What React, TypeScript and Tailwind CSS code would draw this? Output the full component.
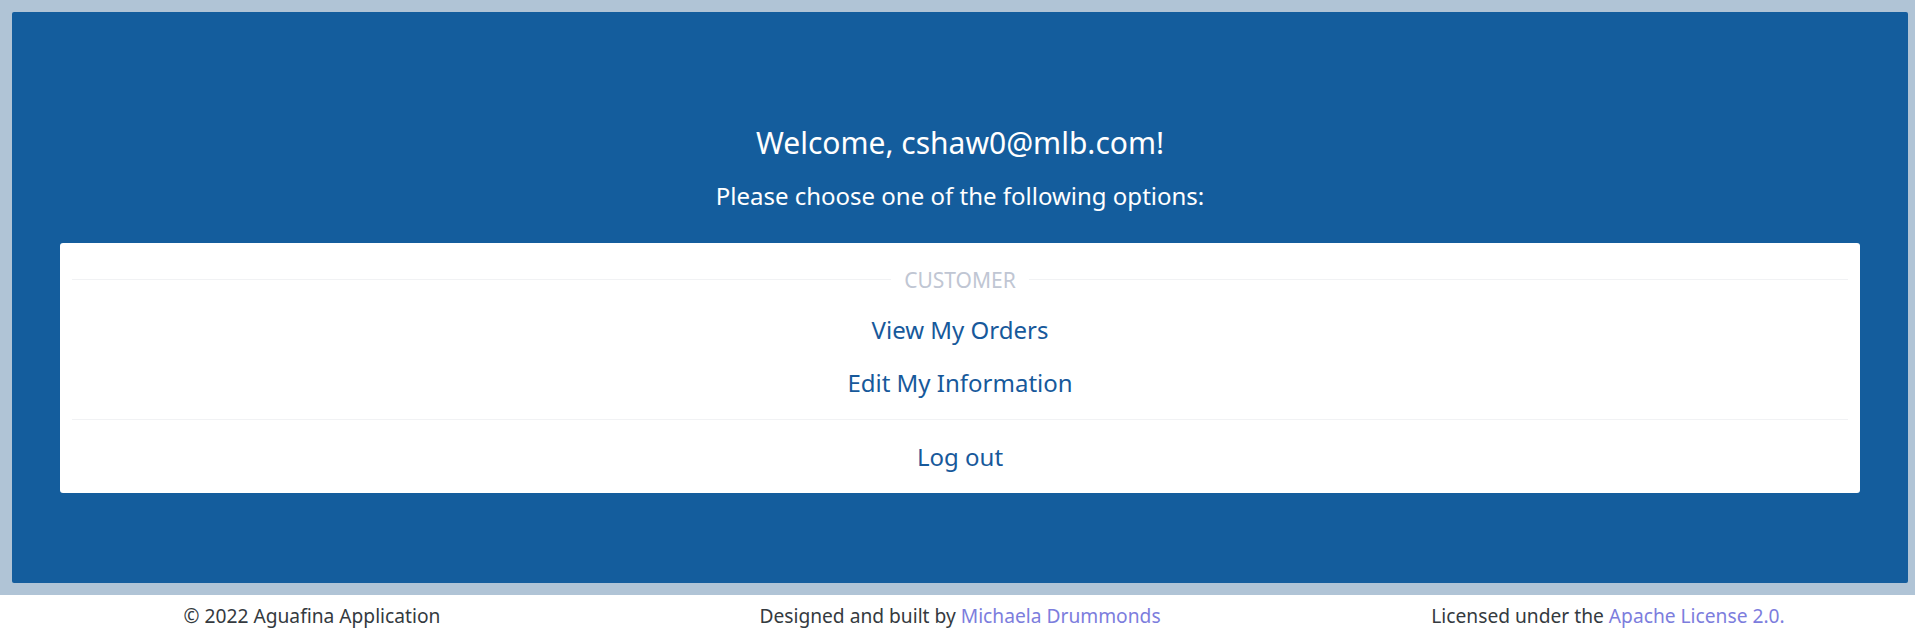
import React from 'react';

const font = { fontFamily: '"Noto Sans", "Open Sans", sans-serif' };

const MenuLink = ({ label }: { label: string }) => (
  <div className="h-[53px] flex items-center justify-center">
    <a href="#" className="text-[24px] leading-[36px] text-[#17599b] no-underline">
      {label}
    </a>
  </div>
);

const App = () => {
  return (
    <div className="w-full overflow-hidden bg-white" style={font}>
      <div className="w-[1920px]">
        <div className="bg-[#b0c4d6] p-[12px]">
          <div className="bg-[#145d9d] rounded-[2px] pt-[113px] pb-[90px] px-[48px] text-white text-center">
            <h4 className="text-[30px] leading-[36px] mb-[20px]">Welcome, cshaw0@mlb.com!</h4>
            <h5 className="text-[24px] leading-[29px] mb-[33px]">Please choose one of the following options:</h5>
            <div className="bg-white rounded-[3px] px-[12px] pt-[25px]">
              <div className="h-6 flex items-center">
                <div className="flex-1 h-px bg-[#f1f2f4] mt-[-2px]" />
                <span className="px-[13px] text-[21px] leading-6 text-[#c0c6d3]">CUSTOMER</span>
                <div className="flex-1 h-px bg-[#f1f2f4] mt-[-2px]" />
              </div>
              <div className="mt-[11px]">
                <MenuLink label="View My Orders" />
                <MenuLink label="Edit My Information" />
              </div>
              <div className="mt-[10px] h-px bg-[#f1f2f4]" />
              <div className="h-[73px] pt-px flex items-center justify-center">
                <a href="#" className="text-[24px] leading-[36px] text-[#17599b]">
                  Log out
                </a>
              </div>
            </div>
          </div>
        </div>
        <footer className="h-[43px] flex items-center justify-center text-[19.2px] text-[#343a40]">
          <div className="w-[648px] shrink-0 text-center">© 2022 Aguafina Application</div>
          <div className="w-[648px] shrink-0 text-center">
            Designed and built by <a href="#" className="text-[#7c7ddd]">Michaela Drummonds</a>
          </div>
          <div className="w-[648px] shrink-0 text-center">
            Licensed under the <a href="#" className="text-[#7c7ddd]">Apache License 2.0.</a>
          </div>
        </footer>
      </div>
    </div>
  );
};

export default App;
